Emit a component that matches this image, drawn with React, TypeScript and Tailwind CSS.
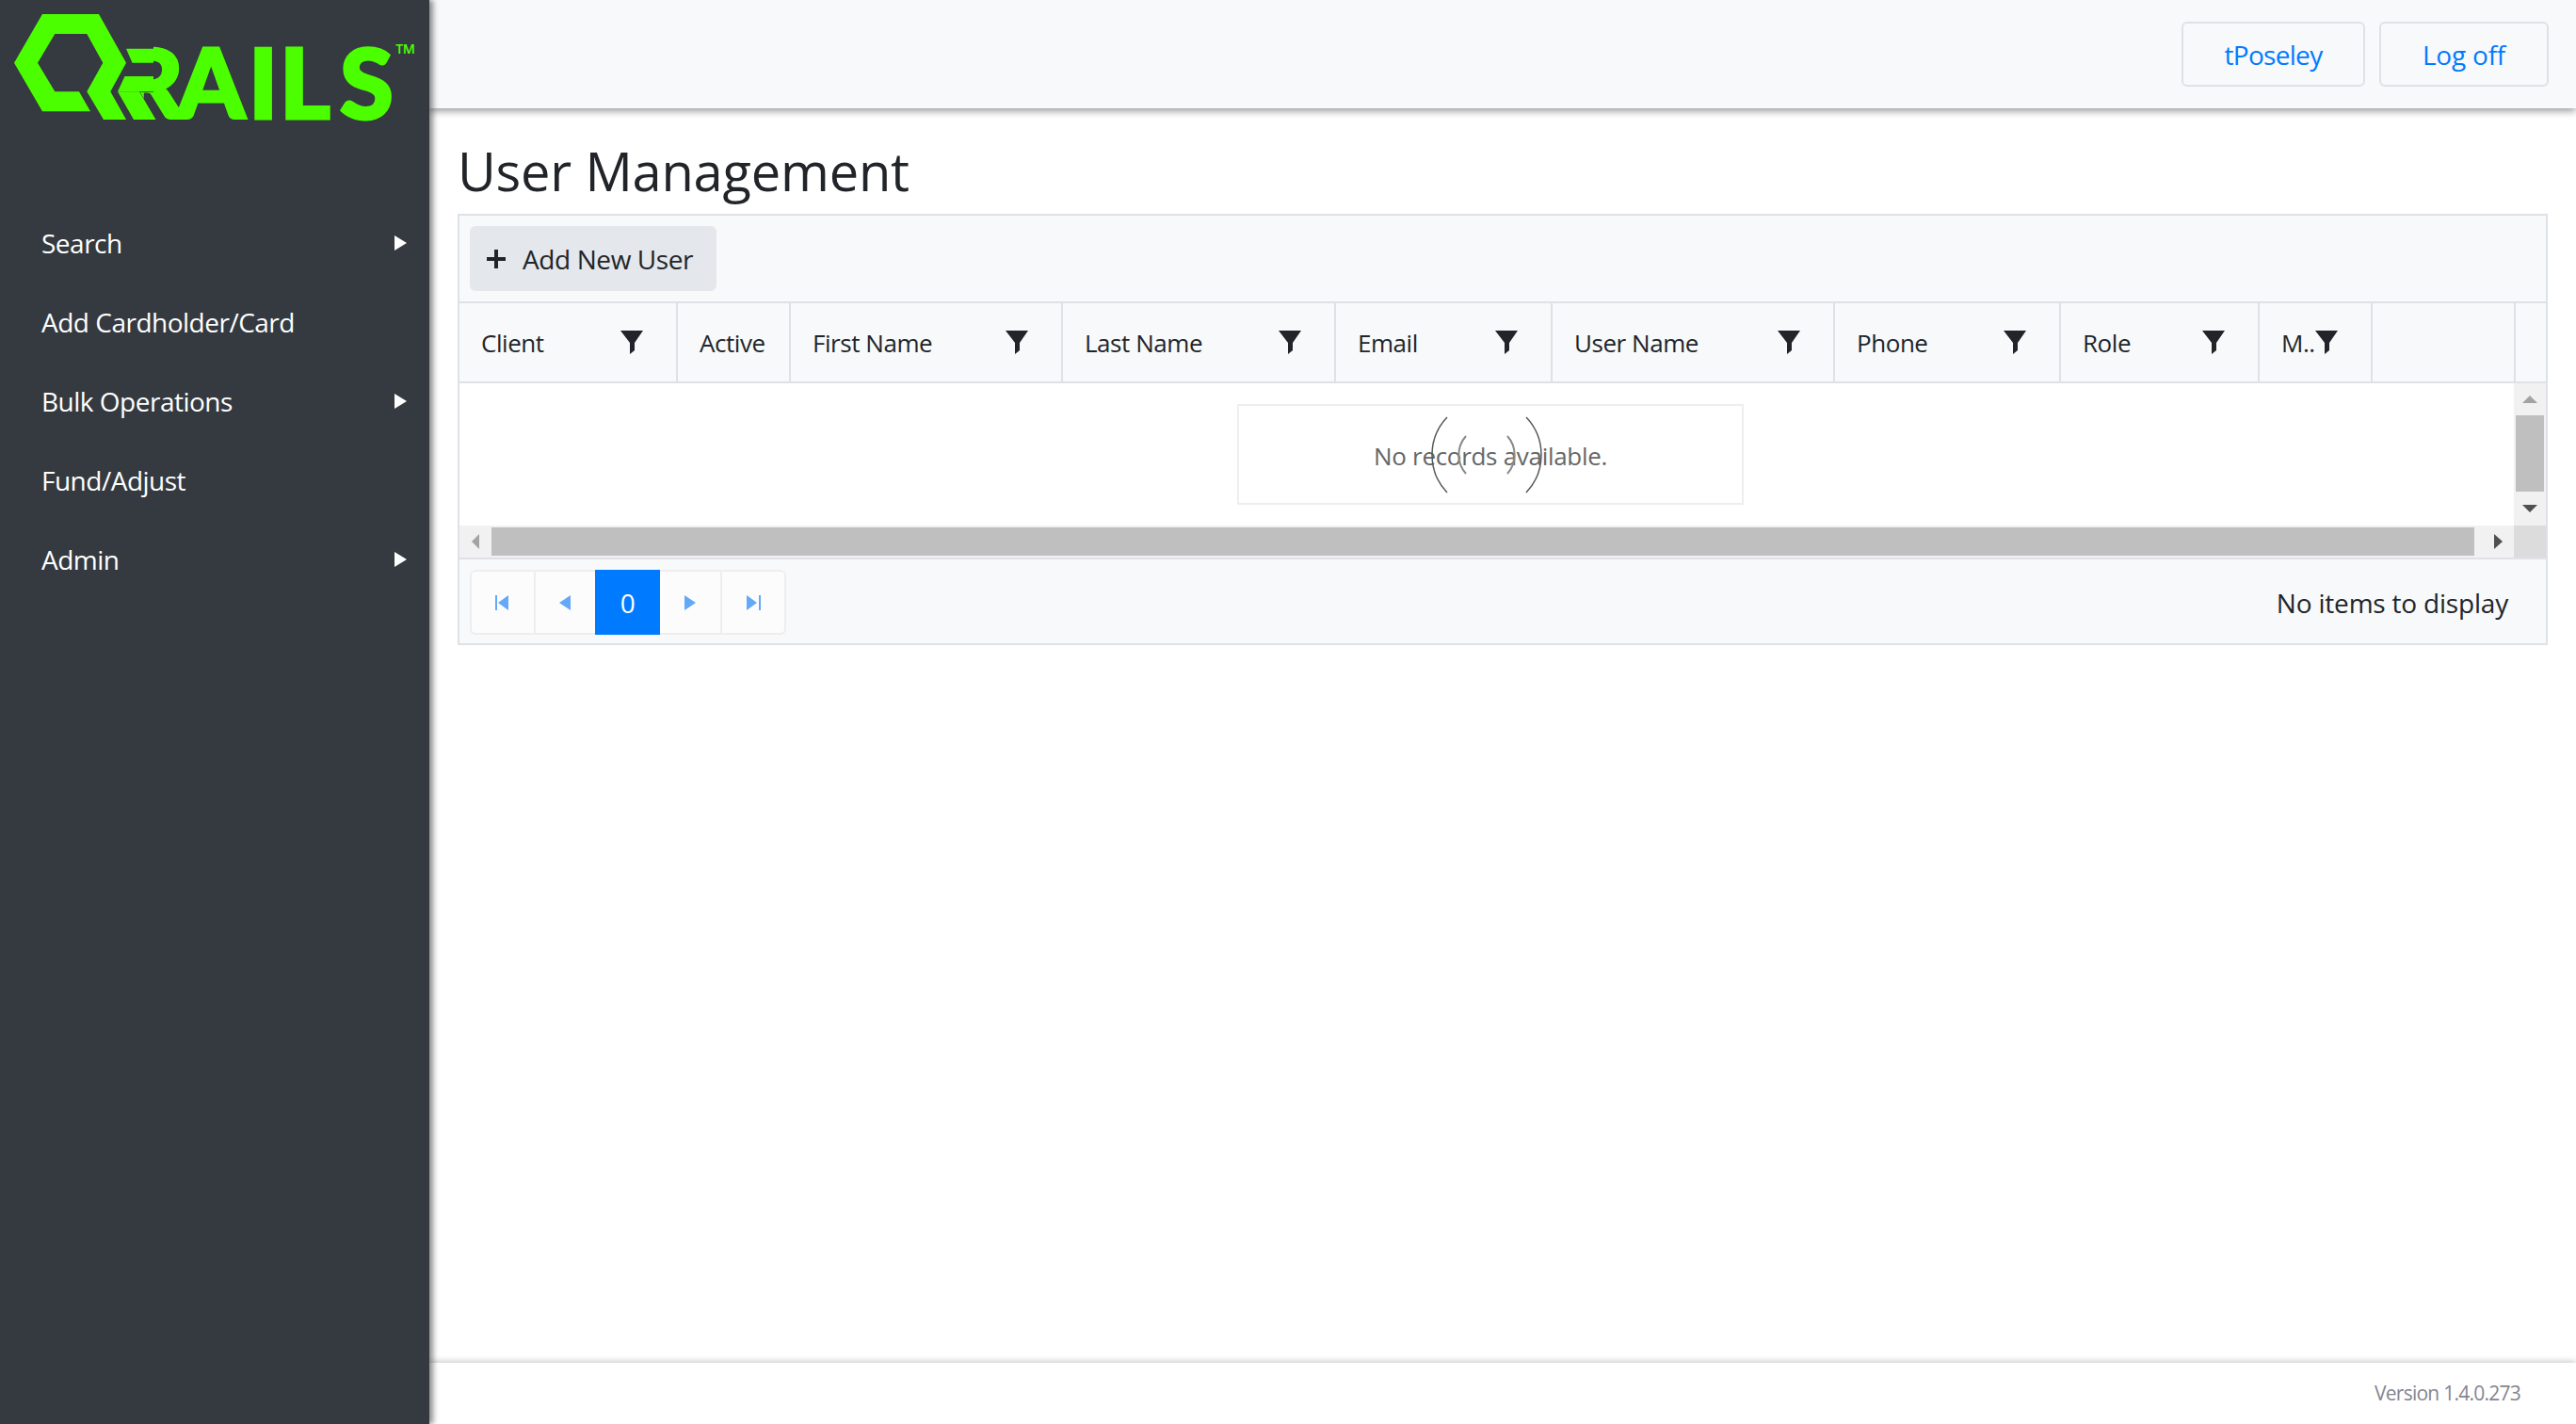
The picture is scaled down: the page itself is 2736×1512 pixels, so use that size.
const columns = [
  { label: "Client", width: "w-[232px]", filter: true },
  { label: "Active", width: "w-[120px]", filter: false },
  { label: "First Name", width: "w-[289px]", filter: true },
  { label: "Last Name", width: "w-[290px]", filter: true },
  { label: "Email", width: "w-[230px]", filter: true },
  { label: "User Name", width: "w-[300px]", filter: true },
  { label: "Phone", width: "w-[240px]", filter: true },
  { label: "Role", width: "w-[211px]", filter: true },
  { label: "M..", width: "w-[120px]", filter: true },
  { label: "", width: "w-[152px]", filter: false },
];

const menu = [
  { label: "Search", arrow: true },
  { label: "Add Cardholder/Card", arrow: false },
  { label: "Bulk Operations", arrow: true },
  { label: "Fund/Adjust", arrow: false },
  { label: "Admin", arrow: true },
];

function Logo() {
  return (
    <svg width="456" height="140" viewBox="0 0 456 140" className="block">
      <text
        x="128 188 264 297 361 420"
        y="126"
        fill="#4cff00"
        stroke="#4cff00"
        strokeWidth="3"
        fontSize="103"
        fontWeight="900"
        fontFamily="Lato, sans-serif"
      >
        RAILS
        <tspan dy="-59" fontSize="28" fontWeight="400" strokeWidth="0" fontFamily="'Open Sans', sans-serif">
          ™
        </tspan>
      </text>
      {/* the R has no stem in the logo, so cover it and add the two bars */}
      <polygon fill="#343a40" points="112,46 163,46 163,98 149,98 167,129 112,129" />
      <polygon fill="#4cff00" points="134,51.7 163,51.7 163,66.7 140.5,66.7" />
      <polygon fill="#4cff00" points="132.5,81 163,81 163,97.3 125,97.3" />
      <polygon fill="#4cff00" points="125,97.3 148,97.3 165.5,127 142,127" />
      <polygon
        fill="#4cff00"
        points="45,15 105,15 134,66.7 117.3,97.3 134,127 110,127 92.3,97.3 109.3,66.7 92.3,36 58.3,36 40,66.7 58.3,97.3 84,97.3 96,118.3 45,118.3 15,66.7"
      />
    </svg>
  );
}

function FilterIcon() {
  return (
    <svg width="24" height="25" viewBox="0 0 24 25" className="absolute right-[35px] top-[29px]">
      <polygon fill="#212529" points="0,0 24,0 15,13 15,21 10,25 10,13" />
    </svg>
  );
}

function Pager() {
  return (
    <div className="flex h-[69px] w-[336px] items-stretch">
      <div className="flex w-[68px] items-center justify-center rounded-l-md border-2 border-r-0 border-[#eeeeee] bg-[#fcfcfd] pr-[3px]">
        <svg width="14" height="16" viewBox="0 0 14 16">
          <path fill="#64a8f8" d="M0 0h2v16H0zM14 0v16L3 8z" />
        </svg>
      </div>
      <div className="flex w-[65px] items-center justify-center border-y-2 border-l-2 border-[#eeeeee] bg-[#fcfcfd] pr-[2px]">
        <svg width="12" height="16" viewBox="0 0 12 16">
          <path fill="#64a8f8" d="M12 0v16L0 8z" />
        </svg>
      </div>
      <div className="flex w-[69px] items-center justify-center bg-[#007bff] text-[28px] text-white">0</div>
      <div className="flex w-[66px] items-center justify-center border-y-2 border-r-2 border-[#eeeeee] bg-[#fcfcfd]">
        <svg width="12" height="16" viewBox="0 0 12 16">
          <path fill="#64a8f8" d="M0 0v16L12 8z" />
        </svg>
      </div>
      <div className="flex w-[68px] items-center justify-center rounded-r-md border-2 border-l-0 border-[#eeeeee] bg-[#fcfcfd] pl-[1px]">
        <svg width="15" height="16" viewBox="0 0 15 16">
          <path fill="#64a8f8" d="M13 0h2v16h-2zM0 0v16L11 8z" />
        </svg>
      </div>
    </div>
  );
}

export default function App() {
  return (
    <div className="flex h-screen overflow-hidden bg-white font-['Open_Sans',sans-serif] text-[28px] tracking-[-0.5px] text-[#212529]">
      <aside className="relative z-20 flex w-[456px] shrink-0 flex-col bg-[#343a40] text-white shadow-[4px_0_6px_rgba(0,0,0,0.45)]">
        <Logo />
        <nav className="mt-[76px] flex flex-col">
          {menu.map((item) => (
            <div key={item.label} className="flex h-[84px] items-center justify-between pl-[44px] pr-[24px]">
              <span>{item.label}</span>
              {item.arrow && (
                <svg width="13" height="16" viewBox="0 0 13 16">
                  <path fill="#ffffff" d="M0 0v16L13 8z" />
                </svg>
              )}
            </div>
          ))}
        </nav>
      </aside>

      <main className="flex min-w-0 flex-1 flex-col">
        <header className="relative z-10 flex h-[115px] shrink-0 items-start justify-end gap-[15px] bg-[#f8f9fa] pr-[29px] pt-[23px] shadow-[0_3px_8px_rgba(0,0,0,0.4)]">
          <button className="h-[69px] w-[195px] rounded-md border-2 border-[#dee2e6] tracking-[-0.7px] text-[#007bff]">tPoseley</button>
          <button className="h-[69px] w-[180px] rounded-md border-2 border-[#dee2e6] tracking-[-0.2px] text-[#007bff]">Log off</button>
        </header>

        <section className="flex-1 px-[30px]">
          <h2 className="mt-[33px] h-[79px] text-[56px] font-medium leading-[67px] tracking-[-0.2px]">User Management</h2>

          <div className="flex h-[458px] flex-col border-2 border-[#dee2e6] bg-[#f8f9fa]">
            <div className="flex h-[91px] shrink-0 items-start pl-[11px] pt-[11px]">
              <button className="flex h-[69px] w-[262px] items-center rounded-md bg-[#e4e7eb] pl-[18px] tracking-[-0.4px]">
                <svg width="20" height="20" viewBox="0 0 20 20" className="mr-[18px]">
                  <path fill="#212529" d="M8 0h4v8h8v4h-8v8H8v-8H0V8h8z" />
                </svg>
                Add New User
              </button>
            </div>

            <div className="flex h-[87px] shrink-0 border-y-2 border-[#dee2e6] text-[26px] tracking-[-0.45px]">
              {columns.map((col) => (
                <div
                  key={col.label || "spacer"}
                  className={`relative flex items-center border-r-2 border-[#dee2e6] pl-[23px] pt-[2px] ${col.width}`}
                >
                  {col.label}
                  {col.filter && <FilterIcon />}
                </div>
              ))}
            </div>

            <div className="flex h-[151px] shrink-0 bg-white">
              <div className="relative flex flex-1 items-center justify-center pl-[8px]">
                <div className="flex h-[107px] w-[538px] items-center justify-center border-2 border-[#eeeeee] pt-[3px] text-[26px] tracking-[-0.3px] text-[#666666]">
                  No records available.
                </div>
                <div className="absolute inset-0 flex items-center justify-center">
                  <svg width="120" height="84" viewBox="-60 -42 120 84" fill="none">
                    <path stroke="#5a5a5a" strokeWidth="1.5" d="M-42 -40A58 58 0 0 0 -42 40M42 -40A58 58 0 0 1 42 40" />
                    <path stroke="#8a8a8a" strokeWidth="2" d="M-22 -20A30 30 0 0 0 -22 20M22 -20A30 30 0 0 1 22 20" />
                  </svg>
                </div>
              </div>
              <div className="flex w-[34px] shrink-0 flex-col items-center bg-[#f1f1f1]">
                <div className="flex h-[34px] w-full items-center justify-center">
                  <svg width="16" height="8" viewBox="0 0 16 8"><path fill="#a3a3a3" d="M8 0l8 8H0z" /></svg>
                </div>
                <div className="h-[81px] w-[30px] bg-[#bfbfbf]" />
                <div className="flex h-[36px] w-full items-center justify-center">
                  <svg width="16" height="8" viewBox="0 0 16 8"><path fill="#505050" d="M0 0h16L8 8z" /></svg>
                </div>
              </div>
            </div>

            <div className="flex h-[34px] shrink-0 bg-[#f1f1f1]">
              <div className="flex w-[34px] shrink-0 items-center justify-center">
                <svg width="8" height="16" viewBox="0 0 8 16"><path fill="#a3a3a3" d="M8 0v16L0 8z" /></svg>
              </div>
              <div className="mt-[2px] h-[30px] w-[2106px] bg-[#bfbfbf]" />
              <div className="flex flex-1 items-center justify-center pl-[8px]">
                <svg width="9" height="16" viewBox="0 0 9 16"><path fill="#505050" d="M0 0v16L9 8z" /></svg>
              </div>
              <div className="w-[34px] shrink-0 bg-[#dcdcdc]" />
            </div>

            <div className="flex h-[91px] shrink-0 items-start justify-between border-t-2 border-[#dee2e6] pl-[11px] pr-[40px] pt-[11px]">
              <Pager />
              <span className="mt-[14px] tracking-[-0.2px]">No items to display</span>
            </div>
          </div>
        </section>

        <footer className="relative z-10 flex h-[65px] shrink-0 items-center justify-end bg-white pr-[59px] text-[21px] tracking-[-0.75px] text-[#85858f] shadow-[0_-2px_6px_rgba(0,0,0,0.2)]">
          Version 1.4.0.273
        </footer>
      </main>
    </div>
  );
}
